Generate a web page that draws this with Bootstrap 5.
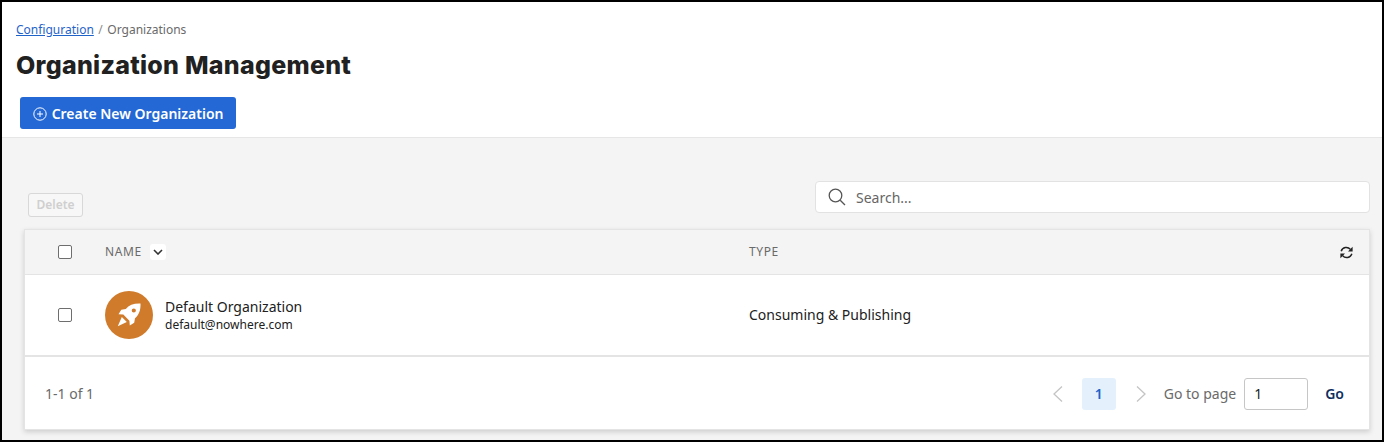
<!DOCTYPE html>
<html lang="en">
  <head>
    <meta charset="UTF-8" />
    <title>Organization Management</title>
    <link href="https://cdn.jsdelivr.net/npm/bootstrap@5.3.3/dist/css/bootstrap.min.css" rel="stylesheet" />
    <style>
      html, body { height: 100%; }
      body {
        font-family: "Noto Sans", sans-serif;
        color: #212121;
        background: #fff;
        border: 2px solid #000;
        overflow: hidden;
      }
      .page-head { height: 136px; padding: 19px 14px 0; border-bottom: 1px solid #e6e6e6; }
      .crumbs { font-size: 12px; line-height: 17px; margin: 0 0 12px; --bs-breadcrumb-divider-color: #8a8a8a; --bs-breadcrumb-item-padding-x: 4.5px; --bs-breadcrumb-margin-bottom: 12px; }
      .crumbs a { color: #1f63c9; }
      .crumbs .active { color: #6a6a6a; }
      .page-title { font-family: Inter, sans-serif; font-size: 25px; font-weight: 800; line-height: 30px; margin: 0 0 17px; letter-spacing: .27px; }
      .btn-create {
        margin-left: 4px; height: 32px; width: 216px; padding: 1px 0 0 13px;
        font-size: 14px; font-weight: 600; line-height: 31px; color: #fff;
        background: #2368d4; border: 0; border-radius: 3px;
      }
      .btn-create svg { margin-right: 1px; vertical-align: -2px; }
      .workspace { background: #f4f4f4; height: 303px; padding: 43px 12px 0 22px; }
      .btn-delete {
        width: 55px; height: 24px; margin: 12px 0 0 4px; padding: 0;
        font-size: 12px; font-weight: 600; line-height: 22px;
        --bs-btn-disabled-color: #cfcfcf;
        --bs-btn-disabled-bg: #f7f7f7;
        --bs-btn-disabled-border-color: #d8d8d8;
        --bs-btn-disabled-opacity: 1;
        border-radius: 3px;
      }
      .search-box { width: 555px; height: 32px; background: #fff; border: 1px solid #e2e2e2; border-radius: 4px; padding: 0 12px; gap: 10px; }
      .search-box input { border: 0; outline: 0; padding: 0; font-size: 14px; flex: 1; background: transparent; }
      .search-box input::placeholder { color: #666; }
      .org-panel { margin-top: 12px; background: #fff; border: 1px solid #e4e4e4; box-shadow: 0 2px 5px rgba(0, 0, 0, .16); }
      .org-grid { display: grid; grid-template-columns: 80px 644px 1fr auto; align-items: center; }
      .grid-head { height: 45px; background: #f4f4f4; border-bottom: 1px solid #e4e4e4; font-size: 12px; letter-spacing: .6px; color: #6a6a6a; }
      .grid-row { height: 82px; border-bottom: 2px solid #e4e4e4; font-size: 14px; }
      .org-type { margin-bottom: 2px; }
      .tick { width: 14px; height: 14px; margin-left: 33px; border: 1px solid #6e6e6e; border-radius: 2px; background: #fff; }
      .sort-chip { width: 16px; height: 16px; background: #fff; border-radius: 3px; margin-left: 8px; }
      .reload { margin-right: 16px; }
      .org-avatar { width: 48px; height: 48px; border-radius: 50%; background: #cf7b2b; flex: none; }
      .org-name { font-size: 14px; line-height: 19px; color: #212121; }
      .org-mail { font-size: 12px; line-height: 17px; color: #212121; }
      .grid-foot { height: 72px; padding: 1px 25px 0 20px; font-size: 14px; color: #6a6a6a; }
      .pager-arrow { width: 14px; }
      .pager-now { width: 34px; height: 32px; background: #e4f1fc; color: #1f63c9; border-radius: 3px; font-weight: 600; font-size: 14px; margin: 0 18px 0 17px; }
      .goto-input { width: 64px; height: 32px; margin: 0 17px 0 8px; padding: 0 9px; border: 1px solid #c6c6c6; border-radius: 3px; font-size: 14px; color: #212121; }
      .go-link { font-weight: 600; color: #0f2f5f; }
    </style>
  </head>
  <body>
    <header class="page-head">
      <nav aria-label="breadcrumb">
        <ol class="breadcrumb crumbs">
          <li class="breadcrumb-item"><a href="#">Configuration</a></li>
          <li class="breadcrumb-item active" aria-current="page">Organizations</li>
        </ol>
      </nav>
      <h1 class="page-title">Organization Management</h1>
      <button type="button" class="btn btn-create text-start">
        <svg width="14" height="14" viewBox="0 0 14 14" fill="none" stroke="#fff" stroke-width="1"><circle cx="7" cy="7" r="6.2" /><path d="M7 4v6M4 7h6" /></svg>
        Create New Organization
      </button>
    </header>

    <main class="workspace">
      <div class="d-flex justify-content-between align-items-start">
        <button type="button" class="btn btn-delete" disabled>Delete</button>
        <div class="search-box d-flex align-items-center">
          <svg width="18" height="18" viewBox="0 0 18 18" fill="none" stroke="#555" stroke-width="1.3"><circle cx="7.5" cy="7.5" r="6.3" /><path d="M12.2 12.2 17 17" /></svg>
          <input type="text" placeholder="Search..." />
        </div>
      </div>

      <section class="org-panel">
        <div class="org-grid grid-head">
          <span class="tick"></span>
          <span class="d-flex align-items-center">NAME
            <span class="sort-chip d-flex align-items-center justify-content-center">
              <svg width="10" height="6" viewBox="0 0 10 6" fill="none" stroke="#333" stroke-width="1.6"><path d="M1 1l4 4 4-4" /></svg>
            </span>
          </span>
          <span>TYPE</span>
          <svg class="reload" width="13" height="13" viewBox="0 0 13 13" fill="none" stroke="#222" stroke-width="1.5">
            <path d="M1.200 5.200A5.300 5.300 0 0 1 10.400 3.400" />
            <path d="M11.800 7.800A5.300 5.300 0 0 1 2.600 9.600" />
            <path d="M12.600 .8v4.600H8z" fill="#222" stroke="none" />
            <path d="M.4 12.200V7.600h4.600z" fill="#222" stroke="none" />
          </svg>
        </div>
        <div class="org-grid grid-row">
          <span class="tick"></span>
          <div class="d-flex align-items-center gap-2 ps-0">
            <span class="org-avatar d-flex align-items-center justify-content-center me-1">
              <svg width="24" height="24" viewBox="0 0 24 24" fill="#fff">
                <path fill-rule="evenodd" d="M23.500.5C17 .2 12 2 8.800 6L4.300 6.800 1.500 11.200l4.800.4 6.100 6.100.4 4.800 4.400-2.800.8-4.500C22 12 23.800 7 23.500.5zM16.800 5.400a2.100 2.100 0 1 1 0 4.200 2.100 2.100 0 0 1 0-4.200z" />
                <path d="M4.800 14 9.800 19 .8 23.200z" />
              </svg>
            </span>
            <div>
              <div class="org-name">Default Organization</div>
              <div class="org-mail">default@nowhere.com</div>
            </div>
          </div>
          <span class="org-type">Consuming &amp; Publishing</span>
          <span></span>
        </div>
        <div class="grid-foot d-flex align-items-center">
          <span class="me-auto">1-1 of 1</span>
          <svg class="pager-arrow" width="12" height="18" viewBox="0 0 12 18" fill="none" stroke="#c4c4c4" stroke-width="1.3"><path d="M10 1.500 2 9l8 7.500" /></svg>
          <span class="pager-now d-flex align-items-center justify-content-center">1</span>
          <svg class="pager-arrow" width="12" height="18" viewBox="0 0 12 18" fill="none" stroke="#c4c4c4" stroke-width="1.3"><path d="M2 1.500 10 9l-8 7.500" /></svg>
          <span class="ms-3">Go to page</span>
          <input class="goto-input" type="text" value="1" />
          <span class="go-link">Go</span>
        </div>
      </section>
    </main>
    <script src="https://cdn.jsdelivr.net/npm/bootstrap@5.3.3/dist/js/bootstrap.bundle.min.js"></script>
  </body>
</html>
